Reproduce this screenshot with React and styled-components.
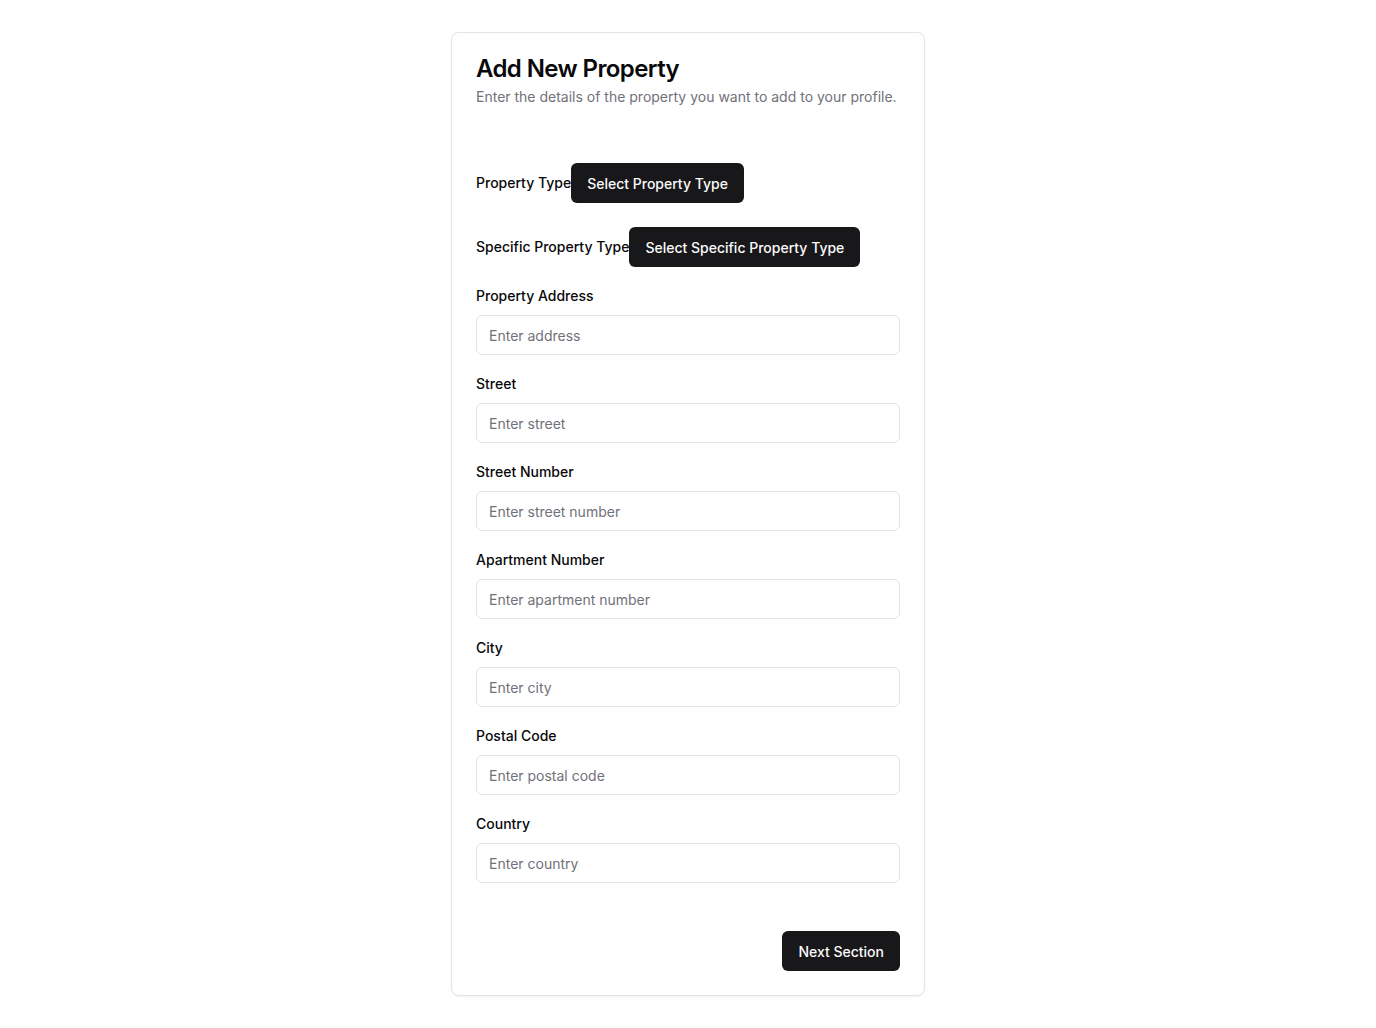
import React from 'react';
import styled, { createGlobalStyle } from 'styled-components';

const GlobalStyle = createGlobalStyle`
  * {
    box-sizing: border-box;
  }
  body {
    margin: 0;
    background: #ffffff;
    font-family: 'Inter', 'Liberation Sans', sans-serif;
    color: #09090b;
  }
`;

const Page = styled.div`
  display: flex;
  justify-content: center;
  padding: 32px 0;
`;

const Card = styled.div`
  width: 474px;
  border: 1px solid #e4e4e7;
  border-radius: 8px;
  background: #ffffff;
  box-shadow: 0 1px 2px rgba(0, 0, 0, 0.05);
`;

const CardHeader = styled.div`
  display: flex;
  flex-direction: column;
  gap: 6px;
  padding: 24px;
`;

const Title = styled.h2`
  margin: 0;
  font-size: 24px;
  line-height: 24px;
  font-weight: 600;
  letter-spacing: -0.025em;
  color: #09090b;
`;

const Description = styled.p`
  margin: 0;
  font-size: 14px;
  line-height: 20px;
  color: #71717a;
`;

const CardContent = styled.div`
  display: flex;
  flex-direction: column;
  padding: 32px 24px 24px;
`;

const SelectRow = styled.div`
  display: flex;
  align-items: center;
  margin-top: ${(p) => p.$gap || 0}px;
`;

const Field = styled.div`
  display: flex;
  flex-direction: column;
  gap: 10px;
  margin-top: 20px;
`;

const Label = styled.label`
  font-size: 14px;
  line-height: 18px;
  font-weight: 500;
  color: #09090b;
`;

const Input = styled.input`
  height: 40px;
  width: 100%;
  border: 1px solid #e4e4e7;
  border-radius: 6px;
  padding: 0 12px;
  font-family: inherit;
  font-size: 14px;
  color: #09090b;
  background: #ffffff;
  outline: none;

  &::placeholder {
    color: #71717a;
  }
`;

const Button = styled.button`
  height: 40px;
  padding: 0 16px;
  border: none;
  border-radius: 6px;
  background: #18181b;
  color: #fafafa;
  font-family: inherit;
  font-size: 14px;
  font-weight: 500;
  cursor: pointer;
  white-space: nowrap;
`;

const Footer = styled.div`
  display: flex;
  justify-content: flex-end;
  margin-top: 48px;
`;

const fields = [
  ['Property Address', 'Enter address'],
  ['Street', 'Enter street'],
  ['Street Number', 'Enter street number'],
  ['Apartment Number', 'Enter apartment number'],
  ['City', 'Enter city'],
  ['Postal Code', 'Enter postal code'],
  ['Country', 'Enter country'],
];

function App() {
  return (
    <>
      <GlobalStyle />
      <Page>
        <Card>
          <CardHeader>
            <Title>Add New Property</Title>
            <Description>
              Enter the details of the property you want to add to your profile.
            </Description>
          </CardHeader>
          <CardContent>
            <SelectRow>
              <Label>Property Type</Label>
              <Button>Select Property Type</Button>
            </SelectRow>
            <SelectRow $gap={24}>
              <Label>Specific Property Type</Label>
              <Button>Select Specific Property Type</Button>
            </SelectRow>
            {fields.map(([label, placeholder]) => (
              <Field key={label}>
                <Label>{label}</Label>
                <Input placeholder={placeholder} />
              </Field>
            ))}
            <Footer>
              <Button>Next Section</Button>
            </Footer>
          </CardContent>
        </Card>
      </Page>
    </>
  );
}

export default App;
